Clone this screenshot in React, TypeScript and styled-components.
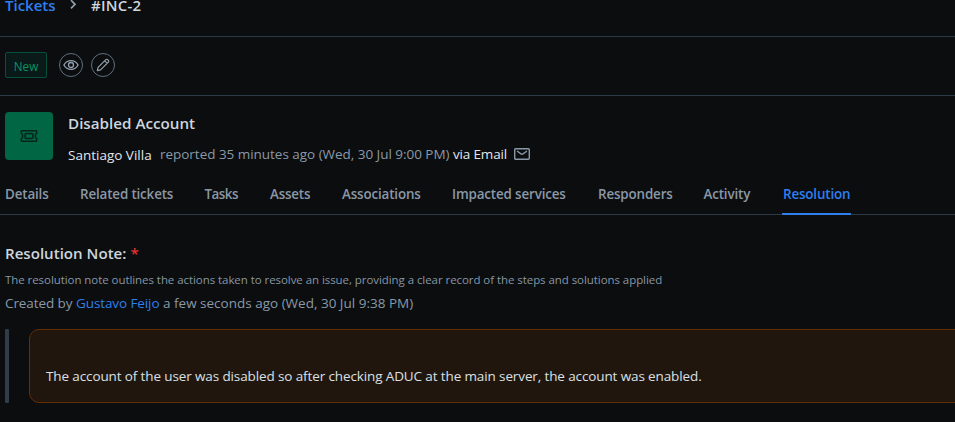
import React from "react";
import styled, { createGlobalStyle } from "styled-components";

const Global = createGlobalStyle`
  * { box-sizing: border-box; }
  html, body { margin: 0; background: #0b0d0f; overflow: hidden; }
  body { font-family: "Open Sans", "Noto Sans", sans-serif; font-size: 13.5px; color: #dee4ea; }
`;

const Page = styled.div`
  width: 955px;
  height: 422px;
  overflow: hidden;
  background: #0b0d0f;
  white-space: nowrap;
`;

const Text = styled.span<{ $w?: number; $ls?: number }>`
  display: inline-block;
  width: ${(p) => (p.$w ? `${p.$w}px` : "auto")};
  letter-spacing: ${(p) => p.$ls ?? 0}px;
`;

const Breadcrumb = styled.nav`
  display: flex;
  align-items: flex-start;
  height: 37px;
  padding-left: 5px;
  border-bottom: 1px solid #2c3a47;
  font-size: 15px;
  font-weight: 600;
  line-height: 20px;
  & > span { margin-top: -5px; }
  svg { margin: 0 14px 0 14px; }
`;

const Crumb = styled(Text)<{ $link?: boolean }>`
  color: ${(p) => (p.$link ? "#2f7fee" : "#ced6de")};
`;

const Toolbar = styled.div`
  display: flex;
  align-items: center;
  height: 59px;
  padding: 0 0 2px 5px;
  border-bottom: 1px solid #2c3a47;
`;

const Status = styled.span`
  width: 42px;
  height: 26px;
  margin-right: 12px;
  border: 1px solid #06503a;
  border-radius: 2px;
  background: #0a1a18;
  color: #069467;
  font-size: 11.7px;
  line-height: 26px;
  text-align: center;
`;

const RoundButton = styled.button`
  display: flex;
  align-items: center;
  justify-content: center;
  width: 24px;
  height: 24px;
  margin-right: 8px;
  padding: 0;
  border: 1px solid #5f7080;
  border-radius: 50%;
  background: transparent;
  color: #93a1af;
`;

const TicketHeader = styled.header`
  display: flex;
  height: 77px;
  padding: 16px 0 0 5px;
`;

const Avatar = styled.div`
  display: flex;
  align-items: center;
  justify-content: center;
  width: 48px;
  height: 48px;
  margin-right: 15px;
  border-radius: 4px;
  background: #006644;
`;

const Title = styled.h1`
  margin: 0 0 1px;
  color: #ced6de;
  font-size: 15.2px;
  font-weight: 600;
  line-height: 22px;
`;

const Meta = styled.div`
  display: flex;
  align-items: center;
  height: 20px;
  margin-top: 10px;
  color: #8a99a8;
  line-height: 20px;
`;

const Bright = styled(Text)<{ $down?: boolean }>`
  color: #e2e7ec;
  padding-top: ${(p) => (p.$down ? 2 : 0)}px;
`;

const Tabs = styled.nav`
  display: flex;
  height: 42px;
  padding-left: 5px;
  border-bottom: 1px solid #2c3a47;
`;

const Tab = styled.a<{ $w: number; $active?: boolean; $ls?: number }>`
  width: ${(p) => p.$w}px;
  height: 42px;
  color: ${(p) => (p.$active ? "#2f7fee" : "#8a98a6")};
  border-bottom: ${(p) => (p.$active ? "2px solid #2f7fee" : "0")};
  border-radius: 1px;
  font-size: 13.4px;
  font-weight: 600;
  line-height: 43px;
  letter-spacing: ${(p) => p.$ls ?? -0.15}px;
  margin-left: ${(p) => (p.$active ? -1 : 0)}px;
  padding-left: ${(p) => (p.$active ? 1 : 0)}px;
`;

const Resolution = styled.section`
  padding: 27px 0 0 5px;
`;

const Heading = styled.h2`
  display: flex;
  margin: 0;
  color: #ced6de;
  font-size: 15.1px;
  font-weight: 600;
  line-height: 22px;
`;

const Required = styled.span`
  color: #e3342f;
`;

const Hint = styled.p`
  margin: 7px 0 0;
  color: #8796a5;
  font-size: 11.5px;
  line-height: 18px;
`;

const Byline = styled.div`
  display: flex;
  margin-top: 4px;
  color: #8a99a8;
  line-height: 20px;
`;

const LinkText = styled(Text)`
  color: #2f7fee;
`;

const Quote = styled.div`
  display: flex;
  gap: 20px;
  height: 74px;
  margin-top: 16px;
`;

const QuoteBar = styled.div`
  width: 4px;
  border-radius: 1px;
  background: #303d48;
`;

const Note = styled.div`
  flex: 1;
  margin-right: -20px;
  padding: 36px 0 0 16px;
  border: 1px solid #632e04;
  border-radius: 10px;
  background: #20160d;
  color: #dae0e6;
  line-height: 20px;
`;

const tabs: { label: string; w: number; ls?: number }[] = [
  { label: "Details", w: 75 },
  { label: "Related tickets", w: 124.5 },
  { label: "Tasks", w: 65.5, ls: -0.5 },
  { label: "Assets", w: 72, ls: -0.2 },
  { label: "Associations", w: 110 },
  { label: "Impacted services", w: 146 },
  { label: "Responders", w: 105.5 },
  { label: "Activity", w: 79.5 },
];

const App = () => (
  <>
    <Global />
    <Page>
      <Breadcrumb>
        <Crumb $link $w={50}>Tickets</Crumb>
        <svg width="8" height="11" viewBox="0 0 8 11" fill="none" stroke="#93a1af" strokeWidth="1.7">
          <path d="M2 .2l4 4.100-4 4.100" />
        </svg>
        <Crumb $ls={0.25}>#INC-2</Crumb>
      </Breadcrumb>
      <Toolbar>
        <Status>New</Status>
        <RoundButton aria-label="Watch">
          <svg width="16" height="16" viewBox="0 0 16 16" fill="none" stroke="currentColor" strokeWidth="1.3">
            <path d="M.9 8C2.5 5 5 3.6 8 3.6S13.500 5 15.100 8C13.500 11 11 12.400 8 12.400S2.500 11 .9 8z" />
            <circle cx="8" cy="8" r="2.5" />
          </svg>
        </RoundButton>
        <RoundButton aria-label="Edit">
          <svg width="14" height="14" viewBox="0 0 14 14" fill="none" stroke="currentColor" strokeWidth="1.2" strokeLinejoin="round">
            <path d="M1.300 12.700l.8-3.300 7.700-7.700a1.300 1.300 0 0 1 1.900 0l.6.6a1.300 1.300 0 0 1 0 1.900l-7.700 7.700zM8.800 2.900l2.400 2.400" />
          </svg>
        </RoundButton>
      </Toolbar>
      <TicketHeader>
        <Avatar>
          <svg width="18" height="12" viewBox="0 0 18 12" fill="none" stroke="#07241c" strokeWidth="1.500" strokeLinejoin="round">
            <path d="M2 .8h14q.7 0 .7.7v1.700l-1.300 1.300v3l1.300 1.300v1.700q0 .7-.7.7H2q-.7 0-.7-.7V8.800l1.300-1.300v-3L1.300 3.200V1.500Q1.300.8 2 .8z" />
            <rect x="5" y="3.400" width="8" height="5.200" rx="1.600" />
          </svg>
        </Avatar>
        <div>
          <Title><Text>Disabled Account</Text></Title>
          <Meta>
            <Bright $down $w={92}>Santiago Villa</Bright>
            <Text $w={293} $ls={-0.03}>reported 35 minutes ago (Wed, 30 Jul 9:00 PM)</Text>
            <Bright $w={61} $ls={-0.17}>via Email</Bright>
            <svg width="16" height="12" viewBox="0 0 16 12" fill="none" stroke="#8a99a8" strokeWidth="1.400">
              <rect x=".7" y=".7" width="14.600" height="10.600" rx="1" />
              <path d="M3 3l4 2.900q1 .6 2 0l4-2.900" />
            </svg>
          </Meta>
        </div>
      </TicketHeader>
      <Tabs>
        {tabs.map((t) => (
          <Tab key={t.label} $w={t.w} $ls={t.ls}>{t.label}</Tab>
        ))}
        <Tab $active $w={69}>Resolution</Tab>
      </Tabs>
      <Resolution>
        <Heading>
          <Text $w={125.5}>Resolution Note:</Text>
          <Required>*</Required>
        </Heading>
        <Hint>
          <Text $ls={-0.063}>The resolution note outlines the actions taken to resolve an issue, providing a clear record of the steps and solutions applied</Text>
        </Hint>
        <Byline>
          <Text $w={71} $ls={-0.08}>Created by</Text>
          <LinkText $w={87} $ls={-0.1}>Gustavo Feijo</LinkText>
          <Text>a few seconds ago (Wed, 30 Jul 9:38 PM)</Text>
        </Byline>
        <Quote>
          <QuoteBar />
          <Note>
            <Text $ls={-0.12}>The account of the user was disabled so after checking ADUC at the main server, the account was enabled.</Text>
          </Note>
        </Quote>
      </Resolution>
    </Page>
  </>
);

export default App;
